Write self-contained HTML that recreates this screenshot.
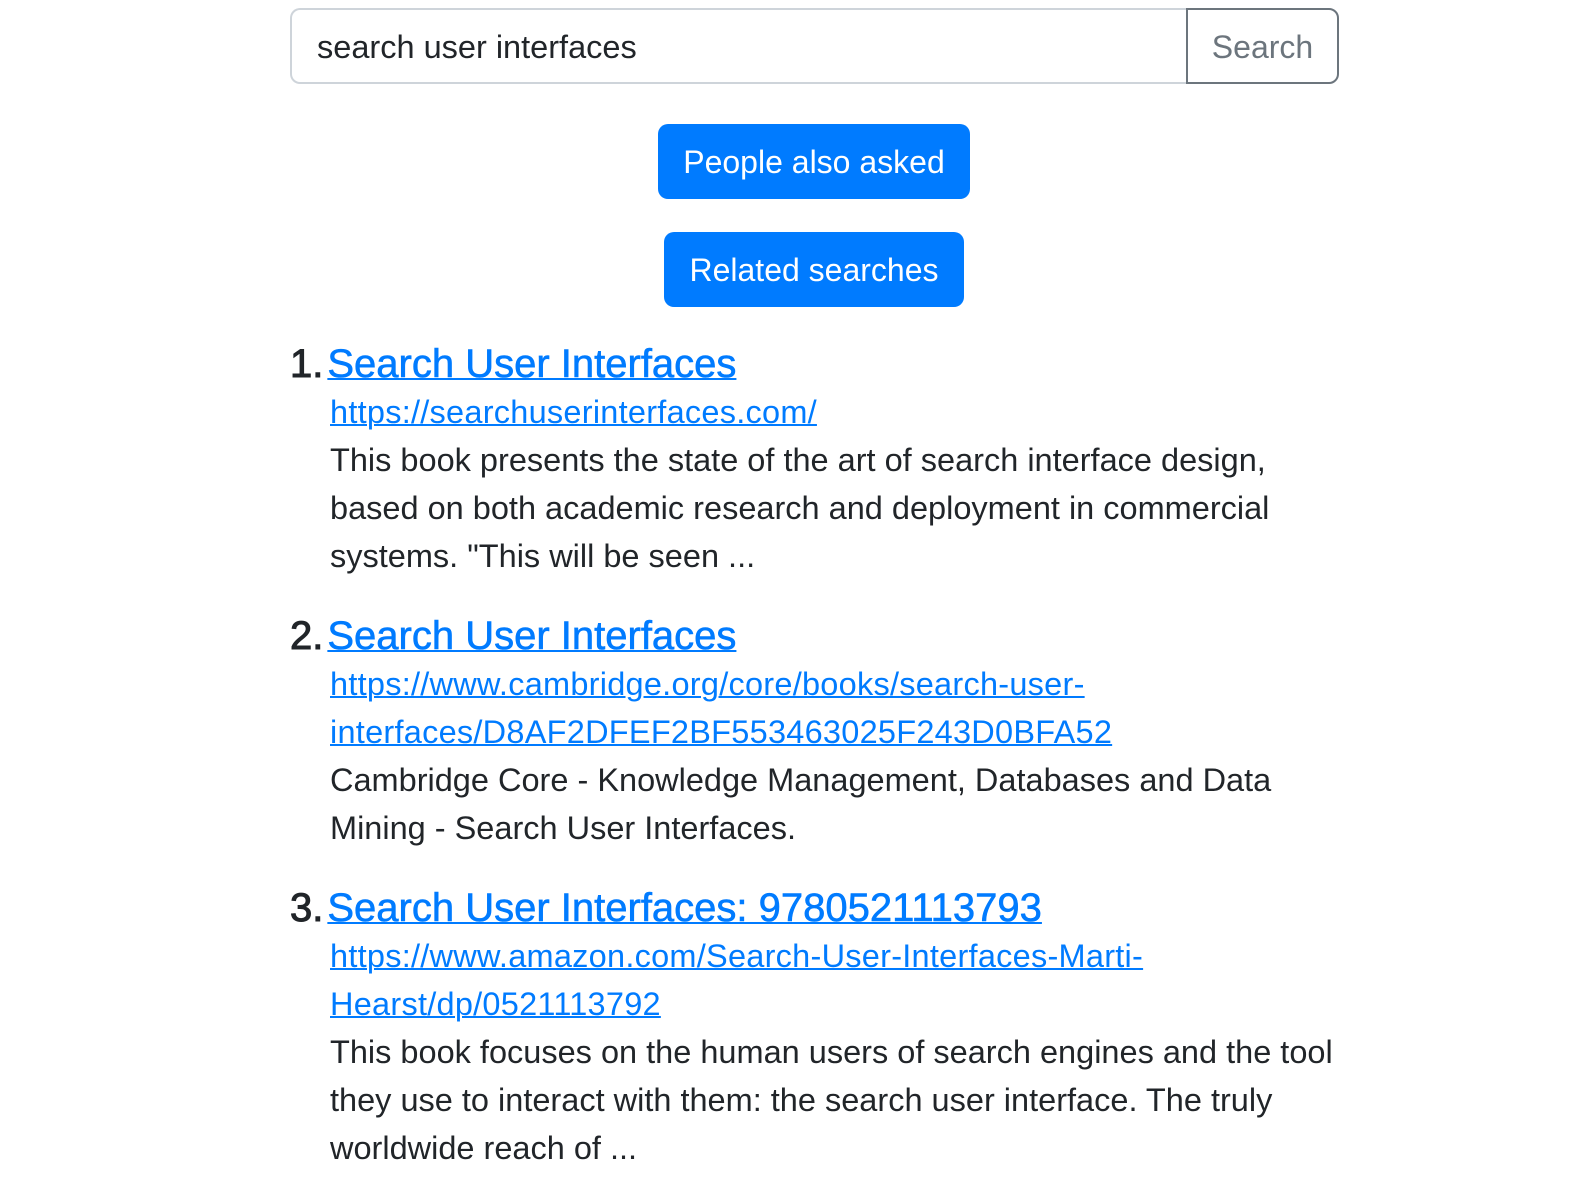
<!DOCTYPE html>
<html><head><meta charset="utf-8"><style>
*{box-sizing:border-box;margin:0;padding:0}
body{width:1570px;height:1190px;background:#fff;font-family:"Liberation Sans",sans-serif;color:#212529;position:relative;overflow:hidden}
.ig{position:absolute;left:290px;top:8px;width:1049px;height:76px;display:flex}
.inp{flex:1;border:2px solid #ced4da;border-right:none;border-radius:10px 0 0 10px;font-size:32.5px;line-height:74px;padding-left:25px;color:#212529}
.sb{width:153px;border:2px solid #6c757d;border-radius:0 10px 10px 0;color:#6c757d;font-size:32px;line-height:74px;text-align:center}
.btn{position:absolute;height:75px;background:#007bff;color:#fff;border-radius:10px;font-size:32px;line-height:77px;text-align:center}
ol{position:absolute;left:290px;top:340px;width:1050px;list-style:none}
li{margin-bottom:32px}
.t{font-size:40px;line-height:48px;font-weight:500;-webkit-text-stroke:0.6px currentColor}
.t a{color:#007bff;text-decoration:underline;text-decoration-thickness:2px}
.n{color:#212529;-webkit-text-stroke:1px #212529;margin-right:4px}
.b{padding-left:40px;font-size:32.5px;line-height:48px}
.b a{color:#007bff;text-decoration:underline;text-decoration-thickness:2px;letter-spacing:0.25px}
</style></head><body>
<div class="ig"><div class="inp">search user interfaces</div><div class="sb">Search</div></div>
<div class="btn" style="left:658px;top:124px;width:312px">People also asked</div>
<div class="btn" style="left:664px;top:232px;width:300px">Related searches</div>
<ol>
<li><div class="t"><span class="n">1.</span><a>Search User Interfaces</a></div>
<div class="b"><a>https://searchuserinterfaces.com/</a><br>This book presents the state of the art of search interface design, based on both academic research and deployment in commercial systems. "This will be seen ...</div></li>
<li><div class="t"><span class="n">2.</span><a>Search User Interfaces</a></div>
<div class="b"><a>https://www.cambridge.org/core/books/search-user-<br>interfaces/D8AF2DFEF2BF553463025F243D0BFA52</a><br>Cambridge Core - Knowledge Management, Databases and Data Mining - Search User Interfaces.</div></li>
<li><div class="t"><span class="n">3.</span><a>Search User Interfaces: 9780521113793</a></div>
<div class="b"><a>https://www.amazon.com/Search-User-Interfaces-Marti-<br>Hearst/dp/0521113792</a><br>This book focuses on the human users of search engines and the tool they use to interact with them: the search user interface. The truly worldwide reach of ...</div></li>
</ol>
</body></html>
